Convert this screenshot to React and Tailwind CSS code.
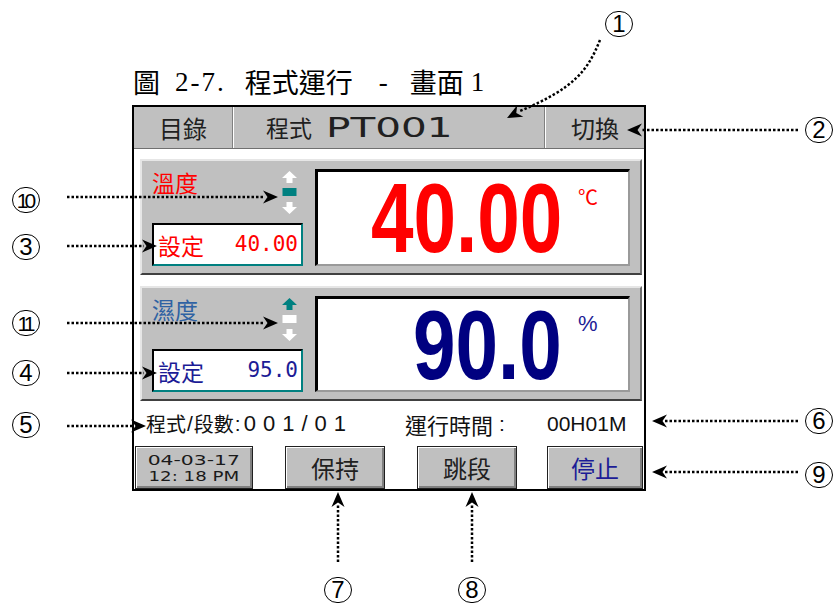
import React from "react";

const cjk = "font-['Noto_Sans_CJK_TC',sans-serif]";
const sans = "font-['Liberation_Sans',sans-serif]";
const btn =
  "bg-[#c0c0c0] border border-[#202020] shadow-[inset_1px_1px_0_#ffffff,inset_-2px_-2px_0_#808080] flex items-center justify-center";

// up / hold / down indicator
const Updown = ({ active }) => {
  const up = active == "up" ? "#008080" : "#ffffff";
  const mid = active == "hold" ? "#008080" : "#ffffff";
  return (
    <svg width="15" height="44" viewBox="0 0 15 44" className="mt-[2px] shrink-0">
      <polygon points="7.5,0 15,7 10.5,7 10.5,12 4.5,12 4.5,7 0,7" fill={up} />
      <rect x="0.5" y="17" width="14" height="8" fill={mid} />
      <polygon points="4.5,31 10.5,31 10.5,36 15,36 7.5,43 0,36 4.5,36" fill="#ffffff" />
    </svg>
  );
};

const Panel = ({ label, labelClass, setClass, setValue, value, valueClass, unit, unitClass, active, height }) => {
  return (
    <div
      className={
        "ml-[6px] mr-[2px] flex gap-[12px] bg-[#c0c0c0] border-2 border-t-[#e6e6e6] border-l-[#e6e6e6] border-r-[#6e6e6e] border-b-[#404040] pl-[10px] pr-[10px] pt-[8px] pb-[7px] " +
        height
      }
    >
      <div className="w-[151px] shrink-0 flex flex-col justify-between">
        <div className="flex justify-between pr-[6px]">
          <span className={cjk + " text-[23px] leading-[26px] " + labelClass}>{label}</span>
          <Updown active={active} />
        </div>
        <div className="h-[43px] bg-white border-2 border-t-black border-l-black border-r-[#008080] border-b-[#008080] flex items-center justify-between pl-[4px] pr-[3px] whitespace-nowrap">
          <span className={cjk + " text-[23px] leading-[26px] " + setClass}>設定</span>
          <span className={"font-['DejaVu_Sans_Mono',monospace] text-[21px] leading-none " + setClass}>{setValue}</span>
        </div>
      </div>
      <div className="flex-1 min-w-0 flex items-center justify-end bg-white border-t-[3px] border-l-[3px] border-t-black border-l-black border-r-2 border-b-2 border-r-[#9a9a9a] border-b-[#9a9a9a]">
        <span className={sans + " inline-block origin-right scale-x-[0.78] font-bold text-[98px] leading-none whitespace-nowrap " + valueClass}>{value}</span>
        <span className={"self-start shrink-0 w-[66px] pl-[16px] " + unitClass}>{unit}</span>
      </div>
    </div>
  );
};

// circled reference number
const Callout = ({ n, pos }) => (
  <div
    className={
      "absolute w-[28px] h-[26px] rounded-full border-[1.5px] border-black flex items-center justify-center leading-none text-black " +
      sans +
      (n.length > 1 ? " text-[21px] tracking-[-4px] pr-[3px]" : " text-[24px]") +
      " " +
      pos
    }
  >
    {n}
  </div>
);

const Arrow = ({ x, y, a }) => (
  <polygon points="0,0 -15,-6.5 -10.5,0 -15,6.5" fill="#000" transform={`translate(${x} ${y}) rotate(${a})`} />
);

const App = () => {
  return (
    <div className="relative w-[838px] h-[605px] overflow-hidden bg-white text-black pt-[66px] pl-[132px]">
      {/* caption */}
      <div className="h-[39px] flex items-start text-[27px] leading-[32px] font-['Liberation_Serif','Noto_Sans_CJK_TC',serif]">
        <span className={cjk + " ml-[1px]"}>圖</span>
        <span className="ml-[15px] tracking-[2px]">2-7.</span>
        <span className={cjk + " ml-[19px]"}>程式運行</span>
        <span className="ml-[26px]">-</span>
        <span className={cjk + " ml-[22px]"}>畫面</span>
        <span className="ml-[7px]">1</span>
      </div>

      {/* screen */}
      <div className="w-[514px] h-[386px] border-2 border-black flex flex-col bg-white">
        <div className="h-[42px] flex bg-[#c0c0c0] border-b border-b-[#707070]">
          <div className={"w-[99px] flex items-center justify-center border-r border-r-[#808080] text-[24px] text-[#202020] " + cjk}>目錄</div>
          <div className="w-[312px] flex items-center pl-[32px] border-l border-l-white border-r border-r-[#808080]">
            <span className={cjk + " text-[23px] text-[#202020]"}>程式</span>
            <span className="ml-[14px] inline-block origin-left scale-x-[1.5] font-['DejaVu_Sans',sans-serif] text-[27px] leading-none text-[#202020]">PT001</span>
          </div>
          <div className={"flex-1 flex items-center justify-center border-l border-l-white text-[24px] text-[#202020] " + cjk}>切換</div>
        </div>

        <div className="pt-[10px] flex flex-col gap-[11px]">
          <Panel
            height="h-[116px]"
            label="溫度"
            labelClass="text-[#ff0000]"
            setClass="text-[#ff0000]"
            setValue="40.00"
            value="40.00"
            valueClass="text-[#ff0000]"
            unit="℃"
            unitClass={"pt-[15px] text-[20px] leading-none text-[#ff0000] " + cjk}
            active="hold"
          />
          <Panel
            height="h-[115px]"
            label="濕度"
            labelClass="text-[#2f62a3]"
            setClass="text-[#1c1c96]"
            setValue="95.0"
            value="90.0"
            valueClass="text-[#000080]"
            unit="%"
            unitClass={"pt-[14px] text-[22px] leading-none text-[#1c1c96] " + sans}
            active="up"
          />
        </div>

        {/* status line */}
        <div className="h-[45px] flex items-center pl-[12px] text-[#111]">
          <div className="w-[259px] flex items-center">
            <span className={cjk + " text-[20px] leading-[24px]"}>程式</span>
            <span className={sans + " text-[21px] mx-[1px]"}>/</span>
            <span className={cjk + " text-[20px] leading-[24px]"}>段數</span>
            <span className={sans + " text-[21px] ml-[1px] mr-[3px]"}>:</span>
            <span className={sans + " text-[22px] leading-[24px] tracking-[7px]"}>001/01</span>
          </div>
          <div className="w-[142px] flex items-center">
            <span className={cjk + " text-[22px] leading-[24px]"}>運行時間</span>
            <span className={sans + " text-[21px] ml-[6px]"}>:</span>
          </div>
          <span className={sans + " text-[21px] leading-[24px]"}>00H01M</span>
        </div>

        {/* buttons */}
        <div className="flex-1 flex">
          <div className={btn + " ml-[1px] w-[118px] flex-col font-['DejaVu_Sans',sans-serif] text-[14px] leading-[16px] text-[#1a1a1a]"}>
            <span className="inline-block scale-x-[1.45] whitespace-pre">04-03-17</span>
            <span className="inline-block scale-x-[1.3] whitespace-pre">12: 18 PM</span>
          </div>
          <div className={btn + " ml-[32px] w-[100px] text-[24px] text-[#202020] " + cjk}>保持</div>
          <div className={btn + " ml-[32px] w-[100px] text-[24px] text-[#202020] " + cjk}>跳段</div>
          <div className={btn + " ml-[30px] w-[96px] text-[24px] text-[#1c1c96] " + cjk}>停止</div>
        </div>
      </div>

      {/* callout leaders */}
      <svg className="absolute left-0 top-0 pointer-events-none" width="838" height="605" viewBox="0 0 838 605">
        <g fill="none" stroke="#000" strokeWidth="2.5" strokeDasharray="2.5 2">
          <path d="M600 40 C588 70 575 88 520 111" />
          <line x1="798" y1="130" x2="642" y2="130" />
          <line x1="798" y1="421" x2="664" y2="421" />
          <line x1="798" y1="472" x2="664" y2="472" />
          <line x1="67" y1="197" x2="264" y2="197" />
          <line x1="67" y1="246" x2="144" y2="246" />
          <line x1="67" y1="323" x2="264" y2="323" />
          <line x1="67" y1="373" x2="144" y2="373" />
          <line x1="67" y1="426" x2="133" y2="426" />
          <line x1="338" y1="562" x2="338" y2="505" />
          <line x1="472" y1="562" x2="472" y2="505" />
        </g>
        <Arrow x={507} y={118} a={152} />
        <Arrow x={627} y={130} a={180} />
        <Arrow x={652} y={421} a={180} />
        <Arrow x={652} y={472} a={180} />
        <Arrow x={278} y={197} a={0} />
        <Arrow x={157} y={246} a={0} />
        <Arrow x={278} y={323} a={0} />
        <Arrow x={157} y={373} a={0} />
        <Arrow x={146} y={426} a={0} />
        <Arrow x={338} y={492} a={-90} />
        <Arrow x={472} y={492} a={-90} />
      </svg>

      <Callout n="1" pos="left-[605px] top-[11px]" />
      <Callout n="2" pos="left-[805px] top-[117px]" />
      <Callout n="6" pos="left-[805px] top-[408px]" />
      <Callout n="9" pos="left-[805px] top-[462px]" />
      <Callout n="10" pos="left-[12px] top-[187px]" />
      <Callout n="3" pos="left-[12px] top-[234px]" />
      <Callout n="11" pos="left-[12px] top-[310px]" />
      <Callout n="4" pos="left-[12px] top-[360px]" />
      <Callout n="5" pos="left-[12px] top-[412px]" />
      <Callout n="7" pos="left-[324px] top-[577px]" />
      <Callout n="8" pos="left-[458px] top-[577px]" />
    </div>
  );
};

export default App;
